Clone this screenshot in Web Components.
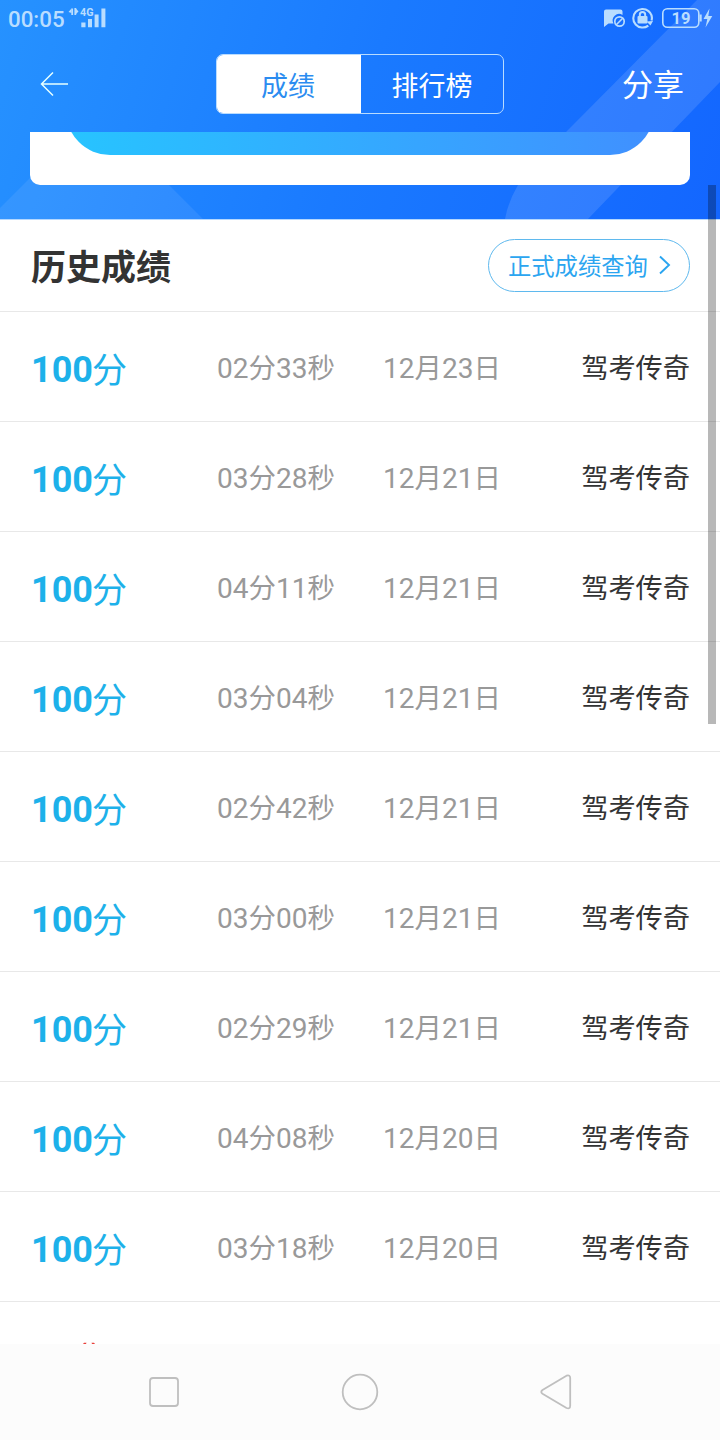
<!DOCTYPE html>
<html lang="zh-CN">
<head>
<meta charset="utf-8">
<meta name="viewport" content="width=device-width, initial-scale=1">
<title>历史成绩</title>
<style>
  html, body { margin: 0; padding: 0; height: 100%; overflow: hidden; background: #fff; }
  body { font-family: Roboto, "Noto Sans CJK SC", sans-serif; }
</style>
</head>
<body>
<score-app>
  <score-header slot="header">
    <status-bar slot="status" time="00:05" battery="19"></status-bar>
    <title-bar slot="title">
      <span slot="active">成绩</span>
      <span slot="other">排行榜</span>
      <span slot="action">分享</span>
    </title-bar>
  </score-header>
  <history-title>
    历史成绩
    <span slot="link">正式成绩查询</span>
  </history-title>
  <score-list></score-list>
  <system-nav slot="footer"></system-nav>
</score-app>

<script>
class ScoreApp extends HTMLElement {
  connectedCallback() {
    this.attachShadow({ mode: 'open' });
    this.shadowRoot.innerHTML = `
      <style>
        :host { display:flex; flex-direction:column; width:720px; height:1440px; position:relative; overflow:hidden; background:#fff }
        main { flex:1; min-height:0; overflow:hidden }
        .scrollbar { position:absolute; right:4px; top:185px; width:8px; height:539px; background:rgba(0,0,0,.28) }
      </style>
      <slot name="header"></slot>
      <main><slot></slot></main>
      <slot name="footer"></slot>
      <div class="scrollbar"></div>
    `;
  }
}
customElements.define('score-app', ScoreApp);

class ScoreHeader extends HTMLElement {
  connectedCallback() {
    this.attachShadow({ mode: 'open' });
    this.shadowRoot.innerHTML = `
      <style>
        :host {
          display:flex; flex-direction:column; height:219px; flex:none; position:relative;
          background:linear-gradient(108deg, #2692ff 0%, #1a7aff 50%, #1366ff 100%);
          border-bottom:1px solid #b5d8ff; box-sizing:content-box;
        }
        .shapes { position:absolute; left:0; top:0; width:720px; height:219px }
        ::slotted(*) { position:relative }
        /* bottom of the summary card, scrolled under the title bar */
        .card {
          position:relative; margin:0 30px; height:53px; overflow:hidden; box-sizing:border-box;
          display:flex; align-items:flex-end; padding:0 36px 30px;
          background:#fff; border-radius:0 0 10px 10px;
        }
        .pill { flex:1; height:88px; border-radius:44px; background:linear-gradient(90deg, #27c4ff, #4090ff) }
      </style>
      <svg class="shapes" viewBox="0 0 720 219">
        <path fill="#fff" fill-opacity=".08" d="M0 208 68 140H124L203 219H0Z"/>
        <path fill="#fff" fill-opacity=".12" d="M697 0H720V82L588 219H505Q508 202 518 185C528 165 545 153 566 132Z"/>
      </svg>
      <slot name="status"></slot>
      <slot name="title"></slot>
      <div class="card"><div class="pill"></div></div>
    `;
  }
}
customElements.define('score-header', ScoreHeader);

class StatusBar extends HTMLElement {
  connectedCallback() {
    this.attachShadow({ mode: 'open' });
    this.shadowRoot.innerHTML = `
      <style>
        :host { display:flex; height:36px; align-items:center; justify-content:space-between; color:#b9ddff; padding:0 7px 0 8px; box-sizing:border-box }
        .left, .right { display:flex; align-items:center }
        .time { font-size:22.300px; line-height:36px; font-weight:500; width:60px; padding-top:1px }
        svg { display:block; fill:none; stroke:currentColor }
        .signal text { font:bold 10.500px Roboto, sans-serif; fill:currentColor; stroke:none }
        .right text { font:bold 16px Roboto, sans-serif; fill:currentColor; stroke:none }
      </style>
      <div class="left">
        <span class="time">${this.getAttribute('time')}</span>
        <svg class="signal" width="40" height="36" viewBox="68 0 40 36">
          <path stroke-width="1.800" d="M72.200 15V8.500M75.300 8V15"/>
          <path fill="currentColor" stroke="none" d="M71.500 8.500V13L68.500 12zM76 8.500l2.500 3L76 14z"/>
          <text x="80" y="16.300" textLength="13.500" lengthAdjust="spacingAndGlyphs">4G</text>
          <path fill="currentColor" stroke="none" d="M81.300 22.500h4.200v4.700H81.300zM88 19h4v8.200h-4zM94.600 14.500h4v12.700h-4zM101.400 8.500h4v18.700h-4z"/>
        </svg>
      </div>
      <div class="right">
        <svg width="110" height="36" viewBox="603 0 110 36">
          <path fill="currentColor" stroke="none" d="M606 9.500h14.500q2 0 2 2V15a6.400 6.400 0 0 0-9 8.500H608.500L604 27V11.500q0-2 2-2z"/>
          <circle cx="619.500" cy="21.500" r="4.700" stroke-width="1.700"/>
          <path stroke-width="1.600" d="M616.300 24.700l6.400-6.400"/>
          <path stroke-width="2.100" d="M651.600 20.500A9.300 9.300 0 0 0 648.500 11.100A9.300 9.300 0 1 0 648.300 25.600"/>
          <path fill="currentColor" stroke="none" d="M646.500 21.500l6.500-.5-2.500 4.500z"/>
          <rect x="637.500" y="16" width="10" height="7.500" rx="1" fill="currentColor" stroke="none"/>
          <path stroke-width="2" d="M639.800 17V14.800a2.700 2.700 0 0 1 5.400 0V17"/>
          <rect x="662.800" y="8.800" width="36" height="18.400" rx="4.500" stroke-width="1.600"/>
          <path fill="currentColor" stroke="none" d="M699.500 14.500h2.200v7h-2.200zM709.500 8.500l-6 10.500h3.800L705.500 27.500l6.800-11.500h-4z"/>
          <text x="671.500" y="24" textLength="19" lengthAdjust="spacingAndGlyphs">${this.getAttribute('battery')}</text>
        </svg>
      </div>
    `;
  }
}
customElements.define('status-bar', StatusBar);

class TitleBar extends HTMLElement {
  connectedCallback() {
    this.attachShadow({ mode: 'open' });
    this.shadowRoot.innerHTML = `
      <style>
        :host { display:flex; height:96px; align-items:center; box-sizing:border-box; color:#fff; padding:0 36px 0 40px }
        .back { width:30px; height:26px; flex:none; fill:none; stroke:#e6ffff; stroke-width:1.500 }
        .tabs { display:flex; width:288px; height:60px; margin-left:146px; box-sizing:border-box; border:1px solid #b9dcff; border-radius:7px; overflow:hidden; font-size:27px; line-height:64px }
        .tabs div { flex:1; text-align:center }
        .tabs .on { background:#fff; color:#2b8cf0; margin:-1px 0 -1px -1px; flex:0 0 145px; line-height:66px; box-sizing:border-box; padding-right:1px }
        .action { margin-left:auto; font-size:31px; line-height:60px; padding-top:3px }
      </style>
      <svg class="back" viewBox="0 0 30 26"><path d="M28 13H2M13 1.500 1.500 13 13 24.500"/></svg>
      <div class="tabs">
        <div class="on"><slot name="active"></slot></div>
        <div><slot name="other"></slot></div>
      </div>
      <div class="action"><slot name="action"></slot></div>
    `;
  }
}
customElements.define('title-bar', TitleBar);

class HistoryTitle extends HTMLElement {
  connectedCallback() {
    this.attachShadow({ mode: 'open' });
    this.shadowRoot.innerHTML = `
      <style>
        :host { display:flex; height:92px; box-sizing:border-box; align-items:center; justify-content:space-between; padding:0 30px 0 31px; border-bottom:1px solid #e8e8e8 }
        .name { font-size:35px; font-weight:700; line-height:46px; color:#333; padding-top:7px }
        .link { display:flex; align-items:center; justify-content:space-between; width:202px; height:53px; box-sizing:border-box; padding:0 18px 0 19px; border:1px solid #5fb9ee; border-radius:27px; color:#2ba5f0; font-size:23.300px; line-height:50px }
        .link span { padding-top:2px }
        svg { width:12px; height:20px; margin-bottom:2px; fill:none; stroke:currentColor; stroke-width:1.900 }
      </style>
      <div class="name"><slot></slot></div>
      <div class="link">
        <span><slot name="link"></slot></span>
        <svg viewBox="0 0 12 20"><path d="M1 1.500 10 10 1 18.500"/></svg>
      </div>
    `;
  }
}
customElements.define('history-title', HistoryTitle);

class ScoreRow extends HTMLElement {
  connectedCallback() {
    // the han glyphs sit slightly smaller than the digits
    const mix = (s) => s.replace(/[^\d]+/g, '<i>$&</i>');
    const { score, time, date, name } = this.dataset;
    this.attachShadow({ mode: 'open' });
    this.shadowRoot.innerHTML = `
      <style>
        :host { display:flex; height:110px; box-sizing:border-box; align-items:center; padding:5px 30px 0 31px; border-bottom:1px solid #e8e8e8; font-size:28px; line-height:40px; color:#999; white-space:nowrap }
        i { font-style:normal; font-size:.98em }
        .score { width:186px; font-size:36px; color:#1db1ea; padding-top:3px }
        .score i { font-size:35px; margin-left:-1px; vertical-align:-1px }
        .time { width:166px }
        .name { margin-left:auto; color:#333; font-size:27.200px }
      </style>
      <span class="score"><b>${score}</b><i>分</i></span>
      <span class="time">${mix(time)}</span>
      <span class="date">${mix(date)}</span>
      <span class="name">${name}</span>
    `;
  }
}
customElements.define('score-row', ScoreRow);

const RECORDS = [
  ['100', '02分33秒', '12月23日'],
  ['100', '03分28秒', '12月21日'],
  ['100', '04分11秒', '12月21日'],
  ['100', '03分04秒', '12月21日'],
  ['100', '02分42秒', '12月21日'],
  ['100', '03分00秒', '12月21日'],
  ['100', '02分29秒', '12月21日'],
  ['100', '04分08秒', '12月20日'],
  ['100', '03分18秒', '12月20日'],
];

class ScoreList extends HTMLElement {
  connectedCallback() {
    this.attachShadow({ mode: 'open' });
    this.shadowRoot.innerHTML = `
      <style>
        :host { display:block }
        .next { display:block; margin:40px 0 0 82px; width:14px; height:2px; fill:#e8423c }
      </style>
      ${RECORDS.map(([score, time, date]) =>
        `<score-row data-score="${score}" data-time="${time}" data-date="${date}" data-name="驾考传奇"></score-row>`).join('')}
      <svg class="next" viewBox="0 0 14 2"><path d="M2 .8H4.500L4 1.900H1zM9.500 .8H12L13 1.900H10z"/></svg>
    `;
  }
}
customElements.define('score-list', ScoreList);

class SystemNav extends HTMLElement {
  connectedCallback() {
    this.attachShadow({ mode: 'open' });
    this.shadowRoot.innerHTML = `
      <style>
        :host { display:flex; flex:none; height:96px; box-sizing:border-box; align-items:center; justify-content:space-between; padding:0 144px; background:#fcfcfc }
        svg { width:40px; height:40px; fill:none; stroke:#bfbfbf; stroke-width:1.800; stroke-linejoin:round }
      </style>
      <svg viewBox="0 0 40 40"><rect x="6" y="6" width="28" height="28" rx="3"/></svg>
      <svg viewBox="0 0 40 40"><circle cx="20" cy="20" r="17.300"/></svg>
      <svg viewBox="0 0 40 40"><path d="M6.500 18 30.500 3.700Q34.200 2.500 34.200 6V33.500Q34.200 37.500 30.500 36L6.500 21.800Q4 20 6.500 18Z"/></svg>
    `;
  }
}
customElements.define('system-nav', SystemNav);
</script>
</body>
</html>
